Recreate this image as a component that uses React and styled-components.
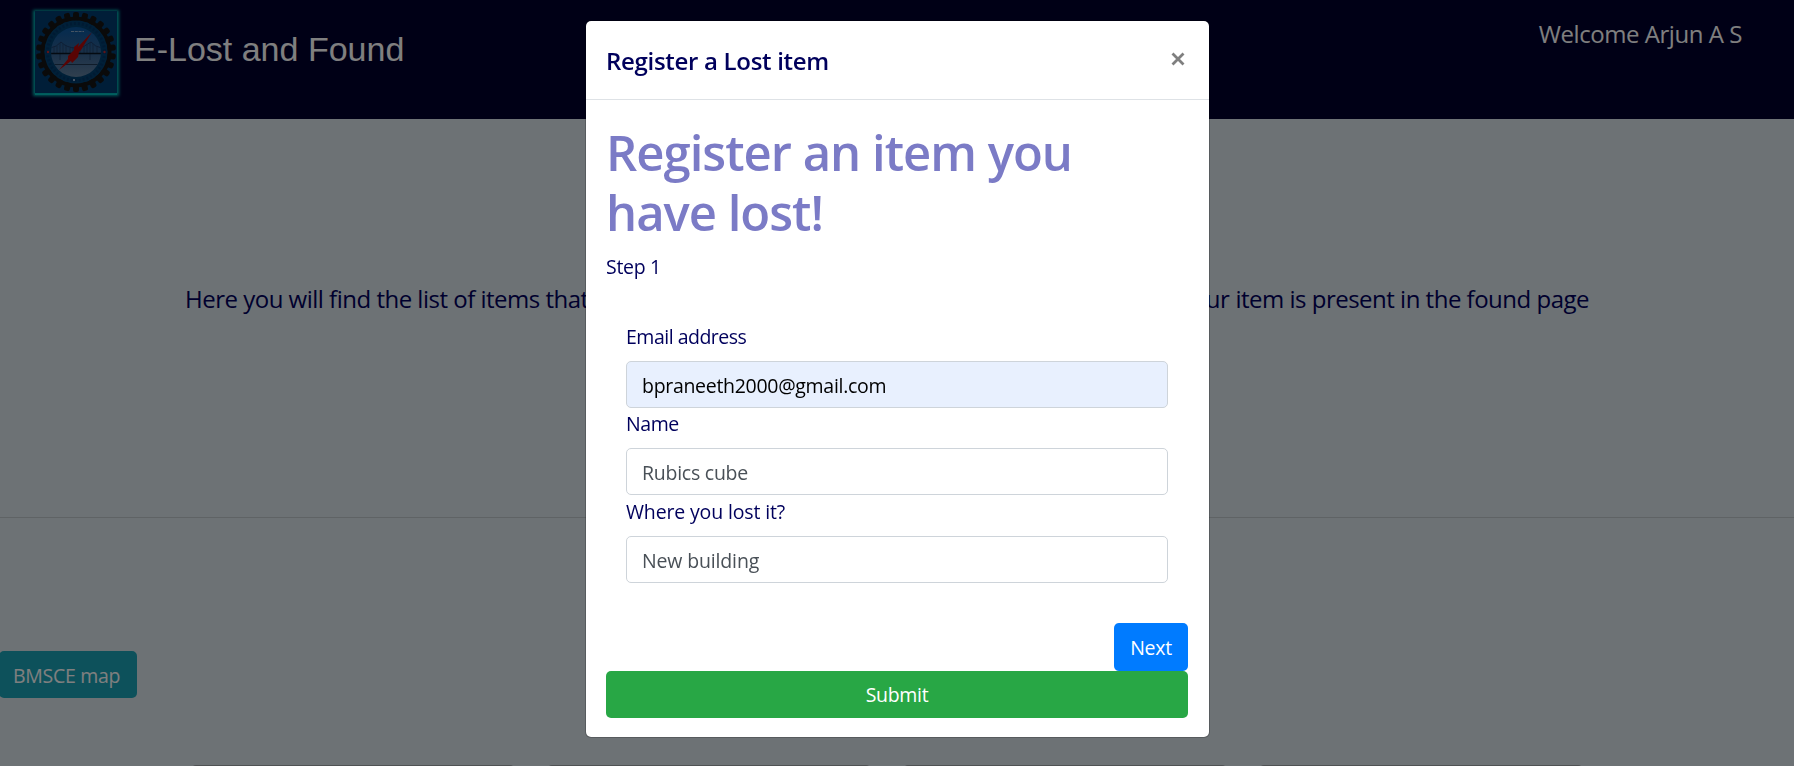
import React from "react";
import styled, { createGlobalStyle } from "styled-components";

const Global = createGlobalStyle`
  * { box-sizing: border-box; }
  body { margin: 0; background: #dae4ea; overflow: hidden; }
`;

const ui = `"Segoe UI", "Open Sans", "Noto Sans", sans-serif`;

const Page = styled.div`
  height: 766px;
  overflow: hidden;
  font-family: ${ui};
  color: #00005c;
  display: flex;
  flex-direction: column;
`;

const Header = styled.header`
  height: 119px;
  flex: none;
  background: #00002c;
  display: flex;
  align-items: flex-start;
  padding: 11px 52px 0 35px;
`;

const Logo = styled.svg`
  display: block;
  width: 82px;
  height: 82px;
  box-shadow: 0 1px 3px 2px #00b4b4, 0 2px 0 0 #00f0f0;
`;

const Brand = styled.div`
  font: 34px/40px "Liberation Sans", Arial, sans-serif;
  color: #fff;
  margin: 18px auto 0 17px;
  white-space: nowrap;
`;

const Fit = styled.span`
  white-space: nowrap;
  letter-spacing: ${(p) => p.$track || 0}px;
`;

const Welcome = styled.div`
  font-size: 24px;
  line-height: 36px;
  margin-top: 5px;
  color: #fff;
`;

const Intro = styled.section`
  height: 398px;
  flex: none;
  padding-top: 162px;
  padding-left: 185px;
  font-size: 24px;
  line-height: 36px;
`;

const Rule = styled.div`
  height: 1px;
  flex: none;
  background: #bfc6ca;
`;

const MapButton = styled.button`
  align-self: flex-start;
  flex: none;
  width: 138px;
  height: 47px;
  margin: 133px 0 0 -1px;
  padding: 2px 0 0 14px;
  border: 0;
  border-radius: 5px;
  text-align: left;
  background: #1ba3b7;
  color: #fff;
  font: 19.5px/45px ${ui};
`;

const Cards = styled.div`
  display: flex;
  flex: none;
  gap: 32px;
  margin: 67px 0 0 191px;
`;

const Card = styled.div`
  width: 324px;
  height: 200px;
  border-radius: 5px;
  background: #9fa4a8;
`;

const Backdrop = styled.div`
  position: fixed;
  inset: 0;
  background: rgba(0, 0, 0, 0.5);
  display: flex;
  justify-content: center;
  align-items: flex-start;
  padding: 20px 0 0 1px;
`;

const Dialog = styled.div`
  width: 625px;
  height: 718px;
  background: #fff;
  background-clip: padding-box;
  border: 1px solid rgba(0, 0, 0, 0.2);
  border-radius: 6px;
  font-family: ${ui};
  color: #00005c;
`;

const DialogHeader = styled.div`
  height: 79px;
  border-bottom: 1px solid #dee2e6;
  display: flex;
  justify-content: space-between;
  padding: 20px 24px 0 20px;
`;

const DialogTitle = styled.h5`
  margin: 1px 0 0;
  font-size: 24px;
  font-weight: 600;
  line-height: 38px;
`;

const Close = styled.button`
  width: 14px;
  height: 14px;
  margin-top: 11px;
  padding: 0;
  border: 0;
  background: none;
  svg { display: block; }
`;

const DialogBody = styled.div`
  padding: 20px 21px 20px 20px;
`;

const Headline = styled.h1`
  margin: 0;
  padding-top: 2px;
  font-size: 49px;
  font-weight: 600;
  line-height: 60px;
  color: #7b7bc6;
`;

const Step = styled.div`
  margin-top: 10px;
  font-size: 19.5px;
  line-height: 30px;
`;

const Form = styled.form`
  padding: 38px 20px 0;
`;

const Label = styled.label`
  display: block;
  height: 40.5px;
  padding-top: 1.5px;
  font-size: 19.5px;
  line-height: 30px;
`;

const Input = styled.input`
  display: block;
  width: 542px;
  height: 47px;
  padding: 2px 15px 0;
  border: 1px solid #ced4da;
  border-radius: 5px;
  outline: 0;
  background: ${(p) => (p.$filled ? "#e8f0fe" : "#fff")};
  color: #000;
  font: 19.5px ${ui};
  letter-spacing: ${(p) => p.$track}px;
  &::placeholder { color: #495057; opacity: 1; }
`;

const Actions = styled.div`
  margin-top: 40px;
  display: flex;
  flex-direction: column;
  align-items: flex-end;
`;

const Button = styled.button`
  width: ${(p) => p.$width};
  height: ${(p) => p.$height}px;
  padding: 1px 0 0;
  border: 0;
  border-radius: 5px;
  background: ${(p) => p.$color};
  color: #fff;
  font: 19.5px ${ui};
`;

const teeth = Array.from({ length: 26 }, (_, i) => (i * 360) / 26);

function Emblem() {
  return (
    <Logo viewBox="0 0 82 82">
      <rect width="82" height="82" fill="#003c70" />
      {teeth.map((a) => (
        <rect key={a} x="38" y="1" width="6" height="9" rx="2" fill="#151515" transform={`rotate(${a} 41 41)`} />
      ))}
      <circle cx="41" cy="41" r="33.5" fill="none" stroke="#151515" strokeWidth="4" />
      <circle cx="41" cy="41" r="31.5" fill="#004070" />
      <circle cx="41" cy="41" r="28.5" fill="none" stroke="#003566" strokeWidth="3" strokeDasharray="2 2" />
      <clipPath id="disc"><circle cx="41" cy="41" r="25" /></clipPath>
      <linearGradient id="sky" x2="0" y2="1">
        <stop offset="0" stopColor="#0756a0" />
        <stop offset=".5" stopColor="#315f90" />
        <stop offset="1" stopColor="#64819f" />
      </linearGradient>
      <g clipPath="url(#disc)">
        <rect x="15" y="15" width="52" height="52" fill="url(#sky)" />
        <path d="M15 37 Q22 36 26 31 Q32 37 41 37 Q49 37 56 31 Q60 36 67 37" fill="none" stroke="#1c3c69" />
        <path d="M19 36V43M22 35V43M25 32V49M28 33V43M31 35V43M35 37V43M38 37V43M45 37V43M49 36V43M52 34V43M55 32V49M58 33V43M62 36V43" stroke="#25466f" strokeWidth="1" />
        <path d="M15 42.5H67" stroke="#081523" strokeWidth="1.3" />
        <path d="M15 53.5H67" stroke="#1e3854" />
      </g>
      <path d="M57 21L46 39 44 41 43 46 37 52 36 50 24 59 33 48 33 45 39 39 39 36 44 32 43 36Z" fill="#b30808" />
      <circle cx="13" cy="41" r="1.2" fill="#c12b32" />
      <circle cx="69.5" cy="41" r="1.2" fill="#c12b32" />
      <path d="M36 20.5H49" stroke="#8da8c6" strokeDasharray="3 .8" />
      <path d="M38 69H40" stroke="#8da8c6" strokeWidth="2" />
    </Logo>
  );
}

const fields = [
  { label: "Email address", track: -0.5, value: "bpraneeth2000@gmail.com", inputTrack: -0.3 },
  { label: "Name", track: -0.4, placeholder: "Rubics cube", inputTrack: -0.25 },
  { label: "Where you lost it?", track: -0.15, placeholder: "New building", inputTrack: -0.15 },
];

export default function App() {
  return (
    <>
      <Global />
      <Page>
        <Header>
          <Emblem />
          <Brand>E-Lost and Found</Brand>
          <Welcome><Fit $track={-0.45}>Welcome Arjun A S</Fit></Welcome>
        </Header>
        <Intro>
          <Fit $track={-0.5}>Here you will find the list of items that </Fit>
          <Fit $track={-0.35}>have been lost. You can register a lost item or check if your </Fit>
          <Fit $track={-0.5}>item is present in the found page</Fit>
        </Intro>
        <Rule />
        <MapButton><Fit $track={-0.3}>BMSCE map</Fit></MapButton>
        <Cards>
          <Card /><Card /><Card /><Card />
        </Cards>
      </Page>
      <Backdrop>
        <Dialog role="dialog">
          <DialogHeader>
            <DialogTitle><Fit $track={-0.3}>Register a Lost item</Fit></DialogTitle>
            <Close aria-label="Close">
              <svg width="14" height="14" viewBox="0 0 14 14">
                <path d="M1.5 1.5L12.5 12.5M12.5 1.5L1.5 12.5" stroke="#7f7f7f" strokeWidth="2.8" />
              </svg>
            </Close>
          </DialogHeader>
          <DialogBody>
            <Headline>
              <Fit $track={-1}>Register an item you</Fit><br />
              <Fit $track={-1}>have lost!</Fit>
            </Headline>
            <Step><Fit $track={-0.3}>Step 1</Fit></Step>
            <Form>
              {fields.map((f) => (
                <React.Fragment key={f.label}>
                  <Label><Fit $track={f.track}>{f.label}</Fit></Label>
                  <Input $filled={!!f.value} $track={f.inputTrack} defaultValue={f.value} placeholder={f.placeholder} />
                </React.Fragment>
              ))}
            </Form>
            <Actions>
              <Button $width="74px" $height={48} $color="#007bff"><Fit $track={-0.3}>Next</Fit></Button>
              <Button $width="100%" $height={47} $color="#28a745"><Fit $track={-0.3}>Submit</Fit></Button>
            </Actions>
          </DialogBody>
        </Dialog>
      </Backdrop>
    </>
  );
}
